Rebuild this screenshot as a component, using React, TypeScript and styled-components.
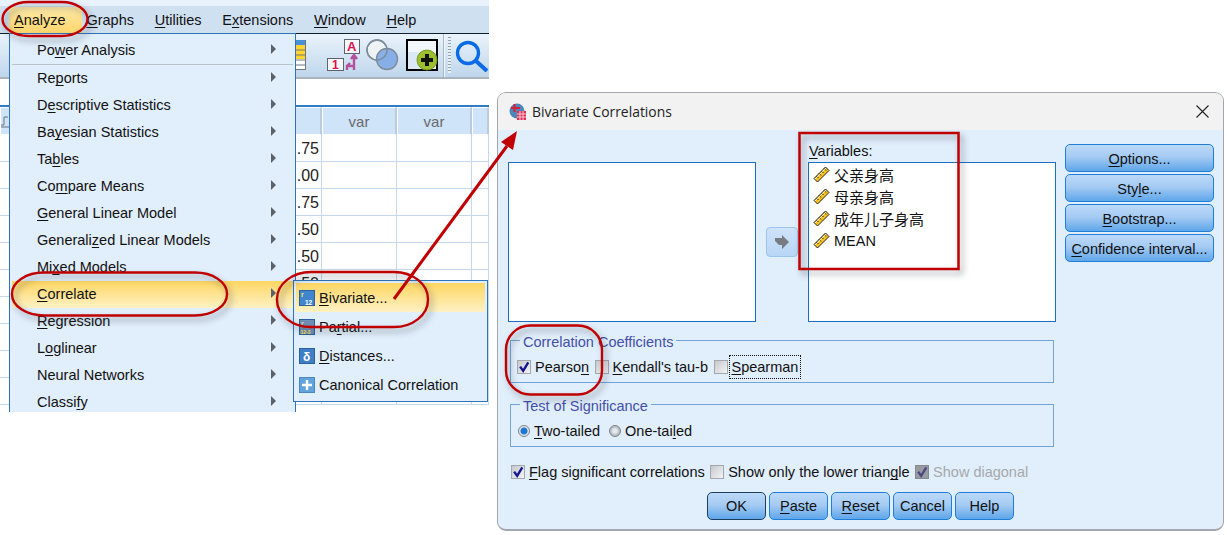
import React from "react";
import styled, { createGlobalStyle, css } from "styled-components";

const GlobalStyle = createGlobalStyle`
  html, body {
    margin: 0;
    background: #fff;
  }
  * {
    box-sizing: border-box;
  }
  u {
    text-decoration-skip-ink: none;
    text-underline-offset: 2px;
  }
`;

const Page = styled.div`
  position: relative;
  width: 1227px;
  height: 535px;
  overflow: hidden;
  background: #fff;
  font-family: "Liberation Sans", Arial, sans-serif;
  font-size: 14.5px;
  color: #111;
`;

/* ---------- SPSS data window ---------- */

const SpssWindow = styled.div`
  position: absolute;
  left: 0;
  top: 0;
  width: 489px;
  height: 412px;
  overflow: hidden;
  display: flex;
  flex-direction: column;
`;

const TopStrip = styled.div`
  height: 6px;
  flex: none;
  background: #e8f2fb;
`;

const MenuBar = styled.div`
  height: 27px;
  flex: none;
  display: flex;
  align-items: center;
  gap: 20.8px;
  padding-left: 14px;
  background: #cfe0f1;
`;

const MenuBarItem = styled.span<{ $open?: boolean }>`
  position: relative;
  z-index: 0;
  ${(p) =>
    p.$open &&
    css`
      &::before {
        content: "";
        position: absolute;
        z-index: -1;
        left: -5px;
        right: -16px;
        top: -5px;
        bottom: -5px;
        background: linear-gradient(#fde9a8, #fdd56c);
      }
    `}
`;

const Toolbar = styled.div`
  height: 46px;
  flex: none;
  display: flex;
  align-items: flex-start;
  padding-left: 296px;
  border-top: 1px solid #10202c;
  border-bottom: 2px solid #a9b4be;
  background: linear-gradient(#eaf3fb, #bfd6ec);
`;

const ToolIcon = styled.svg<{ $left: number; $top: number }>`
  flex: none;
  margin-left: ${(p) => p.$left}px;
  margin-top: ${(p) => p.$top}px;
`;

const ToolSeparator = styled.div`
  flex: none;
  width: 2px;
  height: 43px;
  margin-left: 5px;
  background: #f4f8fc;
  border-left: 1px solid #a9b8c6;
`;

const ToolGrip = styled.div`
  flex: none;
  width: 3px;
  height: 36px;
  margin: 3px 0 0 3px;
  background: repeating-linear-gradient(#8fa3b5 0 1px, #e9f1f8 1px 3px);
`;

const FormulaBar = styled.div`
  height: 28px;
  flex: none;
  background: #fff;
  border-bottom: 2px solid #2e7cc4;
`;

const DataGrid = styled.div`
  display: grid;
  grid-template-columns: 322px 75px 75px 17px;
  grid-template-rows: 28px;
  grid-auto-rows: 27px;
`;

const HeaderCell = styled.div`
  display: flex;
  align-items: center;
  justify-content: center;
  background: #cfe3f9;
  border: 1px solid #fff;
  border-right: 2px solid #b9cbdd;
  color: #6a6a6a;
  font-size: 15px;
`;

const RowHeaderCell = styled(HeaderCell)`
  justify-content: flex-start;
`;

const DataCell = styled.div`
  display: flex;
  align-items: center;
  justify-content: flex-end;
  padding: 1px 2px 0 0;
  border-right: 1px solid #c5d8ec;
  border-bottom: 1px solid #c5d8ec;
  font-size: 16px;
  color: #222;
`;

const Menu = styled.div`
  position: absolute;
  left: 9px;
  top: 33px;
  width: 287px;
  height: 379px;
  padding: 3px 0 0 2px;
  background: #e1eefb;
  border: 1px solid #2d74b8;
  border-bottom: none;
`;

const MenuRow = styled.div<{ $active?: boolean }>`
  height: 27px;
  display: flex;
  align-items: center;
  justify-content: space-between;
  padding: 0 19px 2px 25px;
  ${(p) =>
    p.$active &&
    css`
      background: linear-gradient(#fdd662, #fef1c4);
    `}
`;

const MenuArrow = styled.i`
  width: 0;
  height: 0;
  margin-bottom: 2px;
  border-left: 5px solid #5c6268;
  border-top: 5px solid transparent;
  border-bottom: 5px solid transparent;
`;

const MenuDivider = styled.div`
  height: 1px;
  margin: 0 2px 0 0;
  background: #b9c3cc;
`;

const SubMenu = styled.div`
  position: absolute;
  left: 293px;
  top: 280px;
  width: 195px;
  height: 122px;
  padding: 2px;
  background: #e1eefb;
  border: 1px solid #2d74b8;
`;

const SubMenuRow = styled.div<{ $active?: boolean }>`
  height: 29px;
  display: flex;
  align-items: center;
  gap: 4px;
  padding-left: 3px;
  ${(p) =>
    p.$active &&
    css`
      background: linear-gradient(#fdd662, #fef1c4);
    `}
`;

/* ---------- Bivariate Correlations dialog ---------- */

const Dialog = styled.div`
  position: absolute;
  left: 497px;
  top: 92px;
  width: 727px;
  height: 439px;
  display: flex;
  flex-direction: column;
  overflow: hidden;
  background: #e1eefb;
  border: 1px solid #a3a7ab;
  border-bottom-width: 2px;
  border-radius: 9px;
`;

const TitleBar = styled.div`
  height: 37px;
  flex: none;
  display: flex;
  align-items: center;
  gap: 6px;
  padding: 0 14px 1px 11px;
  background: #f2f2f2;
`;

const TitleText = styled.span`
  flex: 1;
  font-family: "Open Sans", "Noto Sans", sans-serif;
  font-size: 13.9px;
  color: #222;
`;

const TopSection = styled.div`
  height: 191px;
  flex: none;
  display: flex;
  align-items: flex-start;
  padding-left: 10px;
`;

const ListBox = styled.div`
  width: 248px;
  height: 160px;
  background: #fff;
  border: 1px solid #1f6fbd;
  padding-top: 1px;
`;

const SourceColumn = styled.div`
  margin-top: 32px;
`;

const TargetColumn = styled.div`
  margin-left: 10px;
  display: flex;
  flex-direction: column;
`;

const ListLabel = styled.div`
  height: 32px;
  padding-top: 13px;
  line-height: 17px;
  padding-left: 1px;
`;

const MoveButton = styled.div`
  flex: none;
  width: 32px;
  height: 30px;
  margin: 97px 0 0 10px;
  display: flex;
  align-items: center;
  justify-content: center;
  background: linear-gradient(#cfe3f9, #b8d6f6);
  border: 1px solid #9cc4ec;
  border-radius: 4px;
`;

const VariableRow = styled.div`
  height: 22px;
  display: flex;
  align-items: center;
  gap: 4px;
  padding-left: 4px;
  padding-bottom: 1px;
  font-family: "Liberation Sans", "Noto Sans CJK SC", sans-serif;
`;

const CjkText = styled.span`
  font-size: 15px;
`;

const SideButtons = styled.div`
  margin: 14px 0 0 9px;
  display: flex;
  flex-direction: column;
  gap: 2px;
`;

const buttonFace = css`
  display: flex;
  align-items: center;
  justify-content: center;
  background: linear-gradient(#bcd9f8, #a5cbf3 45%, #5fa6ea);
  border: 1px solid #1f7fd8;
  border-radius: 5px;
  color: #111;
`;

const SideButton = styled.div`
  ${buttonFace}
  width: 149px;
  height: 28px;
  padding-top: 1px;
`;

const Group = styled.div`
  position: relative;
  flex: none;
  width: 544px;
  height: 43px;
  margin: 19px 0 0 12px;
  display: flex;
  align-items: center;
  gap: 5.5px;
  padding: 11px 0 0 6px;
  border: 1px solid #71a5d8;
`;

const GroupSecond = styled(Group)`
  margin-top: 21px;
  gap: 9px;
  padding-left: 7px;
`;

const Legend = styled.span`
  position: absolute;
  left: 9px;
  top: -7px;
  padding: 0 3px;
  line-height: 17px;
  background: #e1eefb;
  color: #4350a8;
`;

const Option = styled.label<{ $disabled?: boolean }>`
  display: flex;
  align-items: center;
  gap: 4px;
  color: ${(p) => (p.$disabled ? "#a6a9ad" : "#111")};
`;

const OptionText = styled.span<{ $focused?: boolean }>`
  line-height: 22px;
  ${(p) =>
    p.$focused &&
    css`
      outline: 1px dotted #111;
      padding: 0 2px 0 2px;
      margin-left: -2px;
    `}
`;

const CheckBox = styled.span<{ $disabled?: boolean }>`
  flex: none;
  width: 14px;
  height: 14px;
  display: flex;
  align-items: center;
  justify-content: center;
  border: 1px solid ${(p) => (p.$disabled ? "#85898e" : "#a4a8ac")};
  background: ${(p) =>
    p.$disabled ? "#989ca1" : "linear-gradient(135deg, #c6c9cc, #f3f4f5)"};
`;

const Radio = styled.span<{ $on?: boolean }>`
  flex: none;
  width: 12px;
  height: 12px;
  border-radius: 50%;
  border: 1px solid #7c8288;
  background: ${(p) =>
    p.$on
      ? "radial-gradient(circle, #1e78d2 0 3px, #dfe6ec 4px)"
      : "radial-gradient(circle, #e4eaef 0 2px, #b9c0c7 4px)"};
`;

const FlagRow = styled.div`
  flex: none;
  height: 20px;
  margin: 15px 0 0 13px;
  display: flex;
  align-items: center;
  gap: 5.5px;
`;

const ButtonRow = styled.div`
  flex: none;
  margin-top: 10px;
  display: flex;
  justify-content: center;
  gap: 3px;
`;

const DialogButton = styled.div<{ $default?: boolean }>`
  ${buttonFace}
  width: 59px;
  height: 28px;
  ${(p) =>
    p.$default &&
    css`
      border-color: #1d3f5e;
      border-width: 1.5px;
    `}
`;

/* ---------- red annotations drawn on top ---------- */

const Annotations = styled.svg`
  position: absolute;
  left: 0;
  top: 0;
  pointer-events: none;
`;

const Mark = styled.rect`
  fill: none;
  stroke: #c00000;
  stroke-width: 2.4;
  filter: drop-shadow(3px 4px 3px rgba(40, 50, 60, 0.45));
`;

const RulerIcon = () => (
  <svg width="17" height="17" viewBox="0 0 17 17">
    <path d="M1 12.5 L12.5 1 L16 4.5 L4.5 16 Z" fill="#f6c21c" stroke="#222" strokeWidth="1" />
    <path d="M3.5 10 l2 2 M6 7.5 l2 2 M8.5 5 l2 2 M11 2.5 l2 2" stroke="#222" strokeWidth="1" />
    <path d="M2 13 L13 2" stroke="#fff" strokeWidth="0.8" />
  </svg>
);

const Check = ({ color = "#14148c" }: { color?: string }) => (
  <svg width="14" height="14" viewBox="0 0 14 14">
    <path d="M2.5 6.5 L6 11.5 L12 1.5" fill="none" stroke={color} strokeWidth="2.7" />
  </svg>
);

const TileIcon = ({ bottom, fade }: { bottom: string; fade?: boolean }) => (
  <svg width="16" height="16" viewBox="0 0 16 16">
    <rect x="0.5" y="0.5" width="15" height="15" fill={fade ? "#6f8fb5" : "#3f86cf"} stroke="#2b5f9e" />
    <text x="2" y="6.5" fontFamily="Liberation Sans, sans-serif" fontWeight="700" fontSize="7" fill={fade ? "#d8d8c0" : "#ffe34d"}>
      r
    </text>
    <text x={fade ? 1.5 : 6} y="14.5" fontFamily="Liberation Sans, sans-serif" fontWeight="700" fontSize={fade ? 5 : 6.5} fill={fade ? "#ffe34d" : "#fff"}>
      {bottom}
    </text>
  </svg>
);

const DeltaIcon = () => (
  <svg width="16" height="16" viewBox="0 0 16 16">
    <rect x="0.5" y="0.5" width="15" height="15" fill="#3f7fc6" stroke="#2b5f9e" />
    <text x="4" y="12.5" fontFamily="Liberation Sans, sans-serif" fontWeight="700" fontSize="12" fill="#fff">
      δ
    </text>
  </svg>
);

const PlusIcon = () => (
  <svg width="16" height="16" viewBox="0 0 16 16">
    <rect x="0.5" y="0.5" width="15" height="15" fill="#62a3dc" stroke="#4a86bf" />
    <path d="M8 3 V13 M3 8 H13" stroke="#fff" strokeWidth="2.4" />
  </svg>
);

const DialogIcon = () => (
  <svg width="17" height="17" viewBox="0 0 17 17">
    <circle cx="8" cy="8" r="7.5" fill="#4d86b8" />
    <path d="M2 5 H11 M5.5 1 V9" stroke="#d8203c" strokeWidth="2" />
    <rect x="8" y="8" width="9" height="9" fill="#e0305a" />
    <path d="M8 11 H17 M8 14 H17 M11 8 V17 M14 8 V17" stroke="#f6c6d2" strokeWidth="1" />
  </svg>
);

const menuRows: { label: React.ReactNode; active?: boolean }[] = [
  { label: <>Re<u>p</u>orts</> },
  { label: <>D<u>e</u>scriptive Statistics</> },
  { label: <>Ba<u>y</u>esian Statistics</> },
  { label: <>Ta<u>b</u>les</> },
  { label: <>Co<u>m</u>pare Means</> },
  { label: <><u>G</u>eneral Linear Model</> },
  { label: <>Generali<u>z</u>ed Linear Models</> },
  { label: <>Mi<u>x</u>ed Models</> },
  { label: <><u>C</u>orrelate</>, active: true },
  { label: <><u>R</u>egression</> },
  { label: <>L<u>o</u>glinear</> },
  { label: <>Neural Networks</> },
  { label: <>Classi<u>f</u>y</> },
];

const cellValues = [".75", ".00", ".75", ".50", ".50", ".50", "", "", "", ""];
const variables = ["父亲身高", "母亲身高", "成年儿子身高"];

export default function App() {
  return (
    <Page>
      <GlobalStyle />

      <SpssWindow>
        <TopStrip />
        <MenuBar>
          <MenuBarItem $open><u>A</u>nalyze</MenuBarItem>
          <MenuBarItem><u>G</u>raphs</MenuBarItem>
          <MenuBarItem><u>U</u>tilities</MenuBarItem>
          <MenuBarItem>E<u>x</u>tensions</MenuBarItem>
          <MenuBarItem><u>W</u>indow</MenuBarItem>
          <MenuBarItem><u>H</u>elp</MenuBarItem>
        </MenuBar>
        <Toolbar>
          <ToolIcon $left={0} $top={6} width="10" height="30" viewBox="0 0 10 30">
            <rect width="10" height="30" fill="#fff" />
            <rect width="10" height="5" fill="#4a90d9" />
            <rect y="5" width="10" height="14" fill="#ffd42e" />
            <path d="M0 10 H10 M0 15 H10 M0 20 H10 M0 25 H10 M0 29.5 H10 M9.5 0 V30" stroke="#6c7680" strokeWidth="1" />
          </ToolIcon>
          <ToolIcon $left={21} $top={5} width="33" height="32" viewBox="0 0 33 32">
            <rect x="17.5" y="0.5" width="15" height="14" fill="#f4f6f8" stroke="#5d6670" />
            <text x="20" y="12" fontFamily="Liberation Sans, sans-serif" fontWeight="700" fontSize="13" fill="#e0124f">A</text>
            <rect x="0.5" y="19.5" width="16" height="12" fill="#f4f6f8" stroke="#5d6670" />
            <text x="5" y="30" fontFamily="Liberation Sans, sans-serif" fontWeight="700" fontSize="12" fill="#e0124f">1</text>
            <path d="M27 17 V31 M24 20 L27 16 L30 20 M27 27 H20 V31 M20 27 L23 24" fill="none" stroke="#b4509c" strokeWidth="2.4" />
          </ToolIcon>
          <ToolIcon $left={6} $top={5} width="33" height="33" viewBox="0 0 33 33">
            <circle cx="11" cy="11" r="10" fill="#eef3f8" stroke="#7f8c99" strokeWidth="1.4" />
            <circle cx="21" cy="20" r="10.5" fill="#7ea8e6" fillOpacity="0.9" stroke="#7f8c99" strokeWidth="1.4" />
            <circle cx="11" cy="11" r="10" fill="none" stroke="#7f8c99" strokeWidth="1.4" />
          </ToolIcon>
          <ToolIcon $left={7} $top={5} width="32" height="32" viewBox="0 0 32 32">
            <rect x="1" y="1" width="30" height="30" fill="#dbe8f5" stroke="#000" strokeWidth="2" />
            <rect x="2" y="2" width="28" height="11" fill="#f2f7fc" />
            <circle cx="21" cy="21" r="10" fill="#9cbf2e" stroke="#7a9a22" />
            <path d="M21 15 V27 M15 21 H27" stroke="#111" strokeWidth="4" />
          </ToolIcon>
          <ToolSeparator />
          <ToolGrip />
          <ToolIcon $left={4} $top={6} width="34" height="32" viewBox="0 0 34 32">
            <circle cx="13" cy="13" r="10.5" fill="none" stroke="#0a6be6" strokeWidth="3.4" />
            <path d="M21 21 L32 31" stroke="#0a6be6" strokeWidth="4" />
          </ToolIcon>
        </Toolbar>
        <FormulaBar />
        <DataGrid>
          <RowHeaderCell>
            <svg width="8" height="14" viewBox="0 0 8 14">
              <path d="M0 11 H3 V3 H7 M0 13 H8" fill="none" stroke="#6a7280" strokeWidth="1" />
            </svg>
          </RowHeaderCell>
          <HeaderCell>var</HeaderCell>
          <HeaderCell>var</HeaderCell>
          <HeaderCell />
          {cellValues.map((value, i) => (
            <React.Fragment key={i}>
              <DataCell>{value}</DataCell>
              <DataCell />
              <DataCell />
              <DataCell />
            </React.Fragment>
          ))}
        </DataGrid>

        <Menu>
          <MenuRow>
            <span>Po<u>w</u>er Analysis</span>
            <MenuArrow />
          </MenuRow>
          <MenuDivider />
          {menuRows.map((row, i) => (
            <MenuRow key={i} $active={row.active}>
              <span>{row.label}</span>
              <MenuArrow />
            </MenuRow>
          ))}
        </Menu>

        <SubMenu>
          <SubMenuRow $active>
            <TileIcon bottom="12" />
            <span><u>B</u>ivariate...</span>
          </SubMenuRow>
          <SubMenuRow>
            <TileIcon bottom="12-3" fade />
            <span>Pa<u>r</u>tial...</span>
          </SubMenuRow>
          <SubMenuRow>
            <DeltaIcon />
            <span><u>D</u>istances...</span>
          </SubMenuRow>
          <SubMenuRow>
            <PlusIcon />
            <span>Canonical Correlation</span>
          </SubMenuRow>
        </SubMenu>
      </SpssWindow>

      <Dialog>
        <TitleBar>
          <DialogIcon />
          <TitleText>Bivariate Correlations</TitleText>
          <svg width="13" height="13" viewBox="0 0 13 13">
            <path d="M0.5 0.5 L12.5 12.5 M12.5 0.5 L0.5 12.5" stroke="#222" strokeWidth="1.1" />
          </svg>
        </TitleBar>

        <TopSection>
          <SourceColumn>
            <ListBox />
          </SourceColumn>
          <MoveButton>
            <svg width="16" height="14" viewBox="0 0 16 14">
              <path d="M1 3 H8 V0 L15 7 L8 14 V10 H5 L1 6 Z" fill="#777c82" />
            </svg>
          </MoveButton>
          <TargetColumn>
            <ListLabel><u>V</u>ariables:</ListLabel>
            <ListBox>
              {variables.map((name) => (
                <VariableRow key={name}>
                  <RulerIcon />
                  <CjkText>{name}</CjkText>
                </VariableRow>
              ))}
              <VariableRow>
                <RulerIcon />
                <span>MEAN</span>
              </VariableRow>
            </ListBox>
          </TargetColumn>
          <SideButtons>
            <SideButton><span><u>O</u>ptions...</span></SideButton>
            <SideButton><span>Sty<u>l</u>e...</span></SideButton>
            <SideButton><span><u>B</u>ootstrap...</span></SideButton>
            <SideButton><span><u>C</u>onfidence interval...</span></SideButton>
          </SideButtons>
        </TopSection>

        <Group>
          <Legend>Correlation Coefficients</Legend>
          <Option>
            <CheckBox><Check /></CheckBox>
            <OptionText>Pearso<u>n</u></OptionText>
          </Option>
          <Option>
            <CheckBox />
            <OptionText><u>K</u>endall's tau-b</OptionText>
          </Option>
          <Option>
            <CheckBox />
            <OptionText $focused><u>S</u>pearman</OptionText>
          </Option>
        </Group>

        <GroupSecond>
          <Legend>Test of Significance</Legend>
          <Option>
            <Radio $on />
            <OptionText><u>T</u>wo-tailed</OptionText>
          </Option>
          <Option>
            <Radio />
            <OptionText>One-tai<u>l</u>ed</OptionText>
          </Option>
        </GroupSecond>

        <FlagRow>
          <Option>
            <CheckBox><Check /></CheckBox>
            <OptionText><u>F</u>lag significant correlations</OptionText>
          </Option>
          <Option>
            <CheckBox />
            <OptionText>Show only the lower trian<u>g</u>le</OptionText>
          </Option>
          <Option $disabled>
            <CheckBox $disabled><Check color="#4a4a82" /></CheckBox>
            <OptionText>Show diagonal</OptionText>
          </Option>
        </FlagRow>

        <ButtonRow>
          <DialogButton $default>OK</DialogButton>
          <DialogButton><span><u>P</u>aste</span></DialogButton>
          <DialogButton><span><u>R</u>eset</span></DialogButton>
          <DialogButton>Cancel</DialogButton>
          <DialogButton>Help</DialogButton>
        </ButtonRow>
      </Dialog>

      <Annotations width="1227" height="535" viewBox="0 0 1227 535">
        <Mark x="2.5" y="2" width="85" height="34" rx="26" ry="17" />
        <Mark x="12" y="272.5" width="215" height="43" rx="32" ry="21" />
        <Mark x="277" y="272" width="151" height="55" rx="34" ry="27" />
        <Mark x="506" y="325.5" width="96" height="69" rx="24" ry="24" />
        <Mark x="799.5" y="133" width="159" height="136" style={{ strokeWidth: 2.5 }} />
        <path d="M394 299 L507 146" stroke="#c00000" strokeWidth="3" fill="none" />
        <path d="M517 131 L501 142 L513 150 Z" fill="#c00000" />
      </Annotations>
    </Page>
  );
}
